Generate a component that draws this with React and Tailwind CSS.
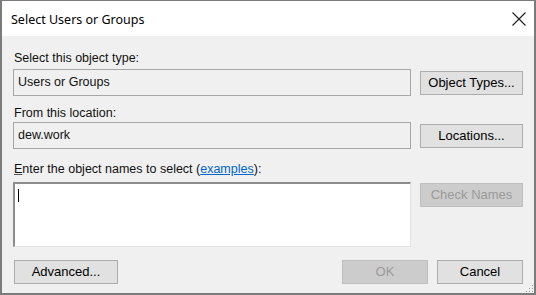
import React from "react";

const ui = { fontFamily: '"Liberation Sans", Arial, sans-serif' };
const title = { fontFamily: '"Noto Sans", "Open Sans", sans-serif' };

function Btn({ children, disabled, className = "" }) {
  return (
    <div
      className={
        "h-[24px] flex items-center justify-center border text-[13px] " +
        (disabled
          ? "bg-[#cccccc] border-[#bfbfbf] text-[#9a9a9a] "
          : "bg-[#e1e1e1] border-[#adadad] text-black ") +
        className
      }
    >
      {children}
    </div>
  );
}

export default function App() {
  return (
    <div
      className="w-[536px] h-[295px] bg-[#f0f0f0] border-t border-x-2 border-b-2 border-[#7b7b7b] flex flex-col relative overflow-hidden"
      style={ui}
    >
      <div className="h-[35px] bg-white flex items-center justify-between pl-[9px] pr-[6px] shrink-0">
        <span className="text-[12.5px] text-black pt-[3px]" style={title}>
          Select Users or Groups
        </span>
        <svg width="16" height="16" viewBox="0 0 16 16" className="mr-[1px]">
          <path d="M1.5 1.5 L14.5 14.5 M14.5 1.5 L1.5 14.5" stroke="#222" strokeWidth="1.2" />
        </svg>
      </div>

      <div className="flex flex-col pl-[11px] pr-[11px] pt-[13px]">
        <div className="text-[12.5px] h-[18px] leading-[18px] pl-[1px] text-[#111]">Select this object type:</div>
        <div className="flex items-center mt-[2px] gap-[9px]">
          <div className="w-[398px] h-[27px] border border-[#a6a6a6] bg-[#f0f0f0] flex items-center pl-[4px] text-[12.5px] text-[#111]">
            Users or Groups
          </div>
          <Btn className="w-[103px]">Object Types...</Btn>
        </div>

        <div className="text-[12.5px] h-[18px] leading-[18px] pl-[1px] mt-[8px] text-[#111]">From this location:</div>
        <div className="flex items-center mt-[0px] gap-[9px]">
          <div className="w-[398px] h-[27px] border border-[#a6a6a6] bg-[#f0f0f0] flex items-center pl-[4px] text-[12.5px] text-[#111]">
            dew.work
          </div>
          <Btn className="w-[103px]">Locations...</Btn>
        </div>

        <div className="text-[12.5px] h-[18px] leading-[18px] pl-[1px] mt-[11px] text-[#111]">
          <span className="underline decoration-[#555]">E</span>nter the object names to select (
          <span className="text-[#0066cc] underline">examples</span>):
        </div>
        <div className="flex items-start mt-[4px] gap-[9px]">
          <div className="w-[398px] h-[65px] bg-white border-t-2 border-l-2 border-t-[#8d8d8d] border-l-[#8d8d8d] border-r border-b border-r-[#e3e3e3] border-b-[#e3e3e3] pl-[3px] pt-[5px]">
            <div className="w-[1px] h-[13px] bg-black" />
          </div>
          <Btn disabled className="w-[103px] mt-[1px]">Check Names</Btn>
        </div>

        <div className="flex items-center mt-[13px]">
          <Btn className="w-[104px] ml-[1px]">Advanced...</Btn>
          <div className="flex-1" />
          <Btn disabled className="w-[86px]">OK</Btn>
          <Btn className="w-[86px] ml-[9px]">Cancel</Btn>
        </div>
      </div>

      <svg width="10" height="10" viewBox="0 0 10 10" className="absolute right-0 bottom-0">
        <rect x="8" y="2" width="1" height="1" fill="#a0a0a0" />
        <rect x="5" y="5" width="1" height="1" fill="#a0a0a0" />
        <rect x="8" y="5" width="1" height="1" fill="#a0a0a0" />
        <rect x="2" y="8" width="1" height="1" fill="#a0a0a0" />
        <rect x="5" y="8" width="1" height="1" fill="#a0a0a0" />
        <rect x="8" y="8" width="1" height="1" fill="#a0a0a0" />
      </svg>
    </div>
  );
}
